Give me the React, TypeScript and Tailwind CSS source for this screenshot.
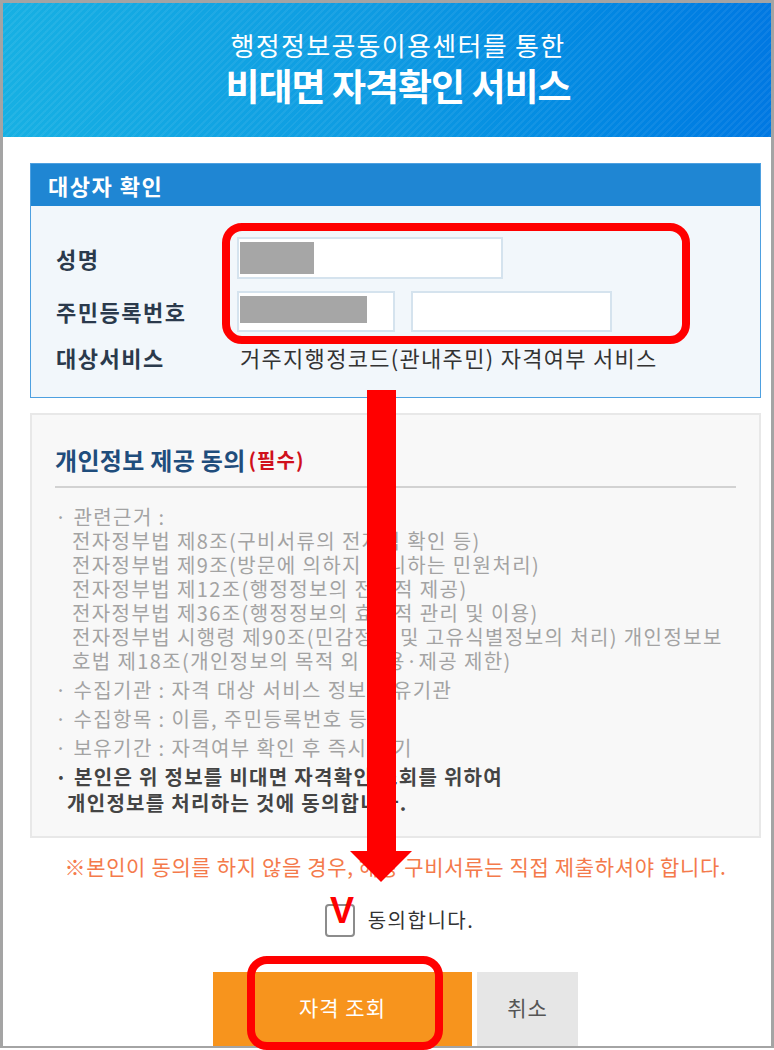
const lawLines = [
  "전자정부법 제8조(구비서류의 전자적 확인 등)",
  "전자정부법 제9조(방문에 의하지 아니하는 민원처리)",
  "전자정부법 제12조(행정정보의 전자적 제공)",
  "전자정부법 제36조(행정정보의 효율적 관리 및 이용)",
  "전자정부법 시행령 제90조(민감정보 및 고유식별정보의 처리) 개인정보보",
  "호법 제18조(개인정보의 목적 외 이용·제공 제한)",
];

const infoItems = [
  "수집기관 : 자격 대상 서비스 정보 보유기관",
  "수집항목 : 이름, 주민등록번호 등",
  "보유기간 : 자격여부 확인 후 즉시 폐기",
];

function Field({ w, mask, maskH }: { w: string; mask: string; maskH: string }) {
  return (
    <div className={`${w} h-full bg-white border-2 border-[#d5e3ee] pl-[1px] pt-[3px]`}>
      <div className={`${mask} ${maskH} bg-[#a6a6a6]`} />
    </div>
  );
}

export default function App() {
  return (
    <div className="relative w-[774px] h-[1050px] bg-white overflow-hidden font-['Noto_Sans_CJK_KR','Noto_Sans',sans-serif]">
      <div className="h-[1048px] border-x-[3px] border-t-[3px] border-b-2 border-[#a4a4a4] flex flex-col overflow-hidden">
        {/* header */}
        <div className="h-[134px] shrink-0 bg-linear-to-r from-[#17b0e3] via-[#0e9ae2] to-[#0078e2]">
          <div className="h-full flex flex-col items-center pt-[24px] pl-[22px] text-white bg-[repeating-linear-gradient(135deg,rgba(255,255,255,0.06)_0px,rgba(255,255,255,0.06)_2px,transparent_2px,transparent_5px)]">
            <div className="text-[26px] leading-[35px] tracking-[1.3px]">행정정보공동이용센터를 통한</div>
            <div className="mt-[1px] text-[37px] leading-[44px] font-bold tracking-[-1px]">비대면 자격확인 서비스</div>
          </div>
        </div>

        <div className="ml-[27px] w-[731px] flex flex-col">
          {/* 대상자 확인 */}
          <div className="mt-[26px] border border-[#4ea0e0]">
            <div className="h-[42px] bg-[#1f86d3] flex items-center pl-[17px] text-white text-[22px] font-bold tracking-[1.5px]">대상자 확인</div>
            <div className="bg-[#f2f7fb] pt-[31px] pb-[25px] pl-[25px] text-[22px] text-[#2b3a4c]">
              <div className="h-[42px] flex items-center">
                <div className="w-[181px] font-bold tracking-[1.5px]">성명</div>
                <Field w="w-[266px]" mask="w-[74px]" maskH="h-[32px]" />
              </div>
              <div className="mt-[12px] h-[41px] flex items-center">
                <div className="w-[181px] font-bold tracking-[1.5px]">주민등록번호</div>
                <div className="flex gap-[16px] h-full">
                  <Field w="w-[158px]" mask="w-[127px]" maskH="h-[27px]" />
                  <div className="w-[201px] h-full bg-white border-2 border-[#d5e3ee]" />
                </div>
              </div>
              <div className="mt-[10px] h-[30px] flex items-center">
                <div className="w-[184px] font-bold tracking-[1.5px]">대상서비스</div>
                <div className="text-[#333] tracking-[1.3px]">거주지행정코드(관내주민) 자격여부 서비스</div>
              </div>
            </div>
          </div>

          {/* 개인정보 제공 동의 */}
          <div className="mt-[15px] h-[425px] border-2 border-[#e8e8e8] bg-[#f8f8f8] pt-[30px] px-[23px]">
            <div className="h-[30px] flex items-center">
              <span className="text-[24px] font-bold text-[#1f4d7c] tracking-[0.3px]">개인정보 제공 동의</span>
              <span className="ml-[3px] text-[20px] font-bold text-[#d0101b] tracking-[1px]">(필수)</span>
            </div>
            <div className="mt-[11px] h-[2px] bg-[#d2d2d2]" />
            <div className="mt-[17px] text-[20px] text-[#a3a3a3] whitespace-nowrap tracking-[1.4px]">
              <div className="leading-[24px]">· 관련근거 :</div>
              {lawLines.map((l) => (
                <div key={l} className="leading-[24px] pl-[17px]">{l}</div>
              ))}
              {infoItems.map((t) => (
                <div key={t} className="mt-[5px] leading-[24px]">· {t}</div>
              ))}
              <div className="mt-[4px] leading-[26px] font-bold text-[#444] tracking-[1.3px]">
                <div>· 본인은 위 정보를 비대면 자격확인 조회를 위하여</div>
                <div className="pl-[12px]">개인정보를 처리하는 것에 동의합니다.</div>
              </div>
            </div>
          </div>

          <div className="mt-[14px] leading-[28px] text-center text-[21px] text-[#f47a4b] tracking-[0.65px]">
            ※본인이 동의를 하지 않을 경우, 해당 구비서류는 직접 제출하셔야 합니다.
          </div>

          <div className="mt-[23px] h-[34px] flex items-center justify-center gap-[13px] pl-[8px]">
            <div className="w-[30px] h-[33px] border-2 border-[#8c8c8c] rounded-[4px] bg-white" />
            <span className="text-[20px] text-[#333] tracking-[1.5px]">동의합니다.</span>
          </div>

          <div className="mt-[35px] flex justify-center gap-[5px]">
            <div className="w-[259px] h-[80px] bg-[#f7941d] text-white text-[21px] text-center pt-[22px] leading-[26px] tracking-[1px]">자격 조회</div>
            <div className="w-[101px] h-[80px] bg-[#e6e6e6] text-[#555] text-[21px] text-center pt-[22px] leading-[26px] tracking-[1px]">취소</div>
          </div>
        </div>
      </div>

      {/* annotations */}
      <div className="absolute left-[222px] top-[223px] w-[468px] h-[121px] border-[8px] border-[#ff0000] rounded-[20px]" />
      <svg className="absolute left-[348px] top-[388px]" width="66" height="496" viewBox="0 0 66 496">
        <rect x="19" y="2" width="29" height="463" fill="#ff0000" />
        <polygon points="2,463 64,463 33,494" fill="#ff0000" />
      </svg>
      <div className="absolute left-[330px] top-[891px] text-[36px] leading-[40px] font-bold text-[#ff0000] font-['Liberation_Sans',sans-serif]">V</div>
      <div className="absolute left-[247px] top-[956px] w-[196px] h-[94px] border-[8px] border-[#ff0000] rounded-[20px]" />
    </div>
  );
}
